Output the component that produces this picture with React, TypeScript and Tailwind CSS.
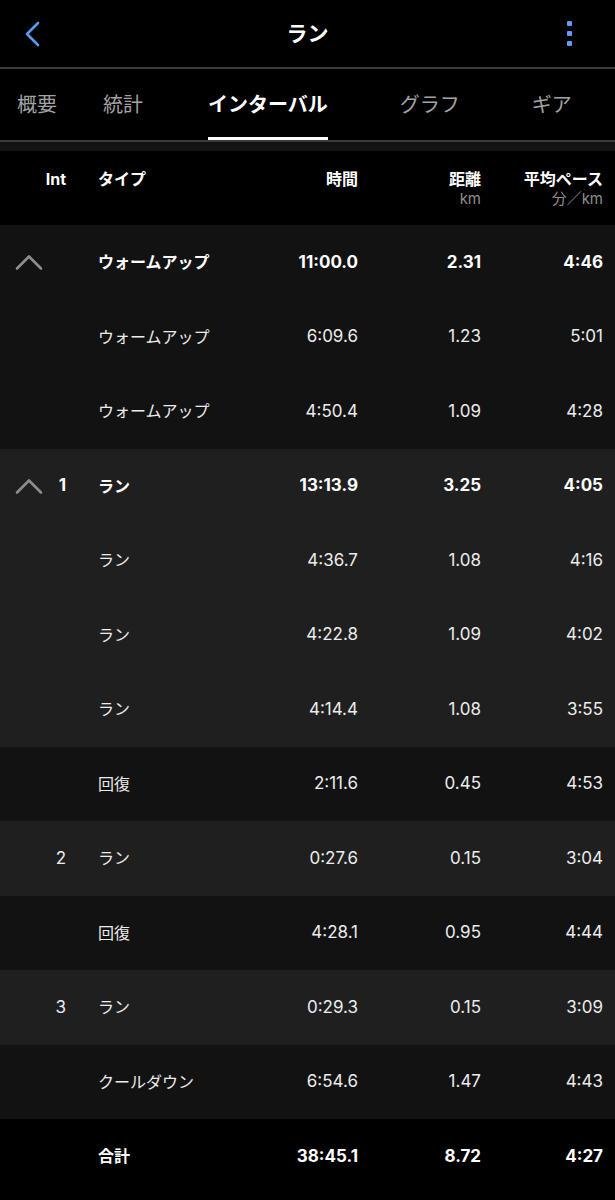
import React from "react";

type Row = {
  chevron?: boolean;
  int?: string;
  type: string;
  time: string;
  dist: string;
  pace: string;
  bold?: boolean;
  bg: "a" | "b" | "k";
};

const rows: Row[] = [
  { chevron: true, type: "ウォームアップ", time: "11:00.0", dist: "2.31", pace: "4:46", bold: true, bg: "a" },
  { type: "ウォームアップ", time: "6:09.6", dist: "1.23", pace: "5:01", bg: "a" },
  { type: "ウォームアップ", time: "4:50.4", dist: "1.09", pace: "4:28", bg: "a" },
  { chevron: true, int: "1", type: "ラン", time: "13:13.9", dist: "3.25", pace: "4:05", bold: true, bg: "b" },
  { type: "ラン", time: "4:36.7", dist: "1.08", pace: "4:16", bg: "b" },
  { type: "ラン", time: "4:22.8", dist: "1.09", pace: "4:02", bg: "b" },
  { type: "ラン", time: "4:14.4", dist: "1.08", pace: "3:55", bg: "b" },
  { type: "回復", time: "2:11.6", dist: "0.45", pace: "4:53", bg: "a" },
  { int: "2", type: "ラン", time: "0:27.6", dist: "0.15", pace: "3:04", bg: "b" },
  { type: "回復", time: "4:28.1", dist: "0.95", pace: "4:44", bg: "a" },
  { int: "3", type: "ラン", time: "0:29.3", dist: "0.15", pace: "3:09", bg: "b" },
  { type: "クールダウン", time: "6:54.6", dist: "1.47", pace: "4:43", bg: "a" },
  { type: "合計", time: "38:45.1", dist: "8.72", pace: "4:27", bold: true, bg: "k" },
];

const FONT = { fontFamily: 'Inter, "Noto Sans CJK JP", sans-serif' };

function Chevron() {
  return (
    <svg width="28" height="17" viewBox="0 0 28 17" className="absolute left-[15px] top-1/2 -translate-y-1/2">
      <polyline points="2,15 14,3 26,15" fill="none" stroke="#8d8d8d" strokeWidth="2.6" strokeLinecap="round" strokeLinejoin="round" />
    </svg>
  );
}

export default function App() {
  return (
    <div className="w-[615px] h-[1200px] bg-black text-[#f2f2f2] overflow-hidden" style={FONT}>
      {/* Top bar */}
      <div className="h-[67px] flex items-center justify-between relative border-b-2 border-[#3a3a3a] box-content">
        <div className="w-[60px] h-full flex items-center pl-[24px]">
          <svg width="16" height="26" viewBox="0 0 16 26">
            <polyline points="14,2 3,13 14,24" fill="none" stroke="#5a9bf2" strokeWidth="2.6" strokeLinecap="round" strokeLinejoin="round" />
          </svg>
        </div>
        <div className="absolute left-0 right-0 top-0 h-full flex items-center justify-center pointer-events-none">
          <span className="text-[21px] font-bold text-white">ラン</span>
        </div>
        <div className="w-[60px] h-full flex flex-col items-end justify-center pr-[43px] gap-[5px]">
          <div className="w-[5px] h-[5px] bg-[#5d9df4] rounded-[1px]" />
          <div className="w-[5px] h-[5px] bg-[#5d9df4] rounded-[1px]" />
          <div className="w-[5px] h-[5px] bg-[#5d9df4] rounded-[1px]" />
        </div>
      </div>

      {/* Tabs */}
      <div className="h-[71px] flex items-stretch pl-[17px] border-b-2 border-[#3a3a3a] box-content text-[20px] text-[#a3a3a3]">
        <div className="flex items-center">概要</div>
        <div className="flex items-center ml-[46px]">統計</div>
        <div className="relative flex items-center ml-[65px] text-white font-bold">
          インターバル
          <div className="absolute left-0 right-0 bottom-0 h-[3px] bg-white" />
        </div>
        <div className="flex items-center ml-[72px]">グラフ</div>
        <div className="flex items-center ml-[72px]">ギア</div>
      </div>
      <div className="h-[9px] bg-[#131313]" />

      {/* Table header */}
      <div className="h-[74px] flex items-start pt-[17px] pr-[12px] text-[16px] font-bold text-white">
        <div className="w-[66px] text-right leading-[22px]">Int</div>
        <div className="ml-[32px] flex-1 leading-[22px]">タイプ</div>
        <div className="w-[110px] text-right leading-[22px]">時間</div>
        <div className="w-[123px] text-right leading-[22px] flex flex-col items-end">
          <span>距離</span>
          <span className="text-[15px] font-normal text-[#8e8e8e] leading-[18px]">km</span>
        </div>
        <div className="w-[122px] text-right leading-[22px] flex flex-col items-end">
          <span>平均ペース</span>
          <span className="text-[15px] font-normal text-[#8e8e8e] leading-[18px]">分／km</span>
        </div>
      </div>

      {/* Rows */}
      {rows.map((r, i) => (
        <div
          key={i}
          className={
            "relative h-[74.5px] flex items-center pr-[12px] text-[16px] " +
            (r.bg === "a" ? "bg-[#121212]" : r.bg === "b" ? "bg-[#1f1f1f]" : "bg-black") +
            (r.bold ? " font-bold text-white" : " text-[#ececec]")
          }
        >
          {r.chevron && <Chevron />}
          <div className="w-[66px] text-right text-[17px]">{r.int ?? ""}</div>
          <div className="ml-[32px] flex-1">{r.type}</div>
          <div className="w-[110px] text-right text-[17px]">{r.time}</div>
          <div className="w-[123px] text-right text-[17px]">{r.dist}</div>
          <div className="w-[122px] text-right text-[17px]">{r.pace}</div>
        </div>
      ))}
    </div>
  );
}
